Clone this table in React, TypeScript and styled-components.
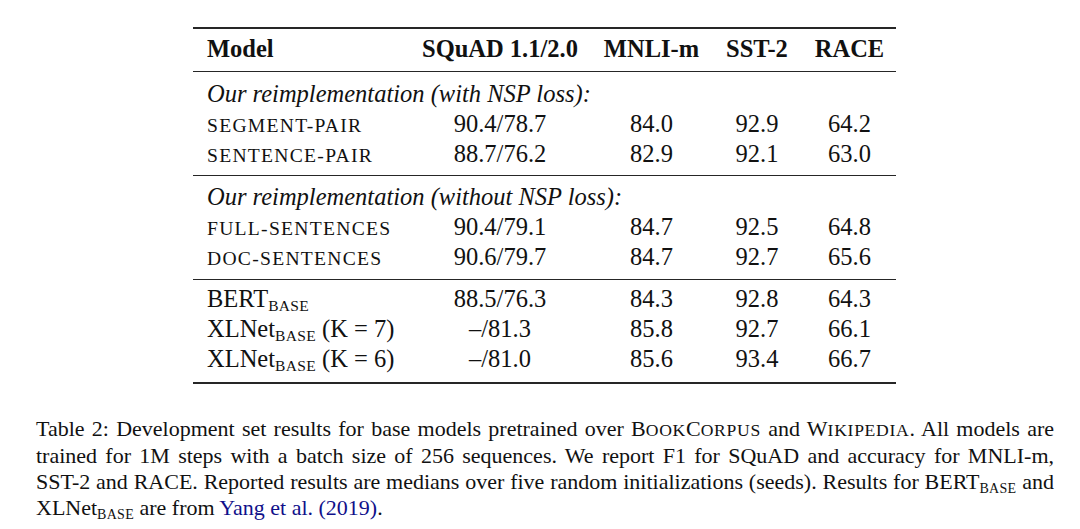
import React from "react";
import styled, { createGlobalStyle } from "styled-components";

const Global = createGlobalStyle`
  html, body { margin: 0; padding: 0; background: #fff; }
  body { font-family: "Liberation Serif", "Times New Roman", serif; color: #111; }
`;

const Page = styled.div`
  width: 1080px;
  height: 529px;
  padding-top: 27px;
  box-sizing: border-box;
  overflow: hidden;
`;

const Table = styled.div`
  margin-left: 193px;
  width: 703px;
  font-size: 24.5px;
`;

const Rule = styled.div<{ $thick?: boolean; $top: number }>`
  height: ${(p) => (p.$thick ? 2 : 1)}px;
  margin-top: ${(p) => p.$top}px;
  background: #262626;
`;

const Group = styled.div<{ $top: number }>`
  margin-top: ${(p) => p.$top}px;
`;

const Row = styled.div<{ $bold?: boolean }>`
  display: grid;
  grid-template-columns: 215px 184px 119px 92px 93px;
  height: 30px;
  line-height: 30px;
  font-weight: ${(p) => (p.$bold ? 700 : 400)};
  white-space: nowrap;
`;

const Label = styled.div`
  padding-left: 14px;
`;

const Num = styled.div`
  text-align: center;
`;

const Section = styled.div`
  height: 30px;
  line-height: 30px;
  padding-left: 14px;
  font-style: italic;
  white-space: nowrap;
`;

const SmallCaps = styled.span<{ $wide?: boolean }>`
  font-size: 0.8em;
  letter-spacing: ${(p) => (p.$wide ? "0.065em" : "0.04em")};
  text-transform: uppercase;
`;

const Sub = styled.span<{ $size: number }>`
  font-size: ${(p) => p.$size}px;
  letter-spacing: 0.02em;
  text-transform: uppercase;
  vertical-align: -${(p) => Math.round(p.$size * 0.25)}px;
  line-height: 0;
`;

const Caption = styled.div`
  margin-top: 32px;
  margin-left: 36px;
  width: 1018px;
  font-size: 22px;
  line-height: 26px;
`;

const CaptionLine = styled.div<{ $last?: boolean }>`
  text-align: ${(p) => (p.$last ? "left" : "justify")};
  text-align-last: ${(p) => (p.$last ? "left" : "justify")};
  white-space: ${(p) => (p.$last ? "nowrap" : "normal")};
`;

const Cite = styled.span`
  color: #10108a;
`;

type DataRow = { label: React.ReactNode; v: [string, string, string, string] };

const Base = ({ size }: { size: number }) => <Sub $size={size}>base</Sub>;

const group1: DataRow[] = [
  { label: <SmallCaps $wide>segment-pair</SmallCaps>, v: ["90.4/78.7", "84.0", "92.9", "64.2"] },
  { label: <SmallCaps $wide>sentence-pair</SmallCaps>, v: ["88.7/76.2", "82.9", "92.1", "63.0"] },
];
const group2: DataRow[] = [
  { label: <SmallCaps $wide>full-sentences</SmallCaps>, v: ["90.4/79.1", "84.7", "92.5", "64.8"] },
  { label: <SmallCaps $wide>doc-sentences</SmallCaps>, v: ["90.6/79.7", "84.7", "92.7", "65.6"] },
];
const group3: DataRow[] = [
  { label: <>BERT<Base size={15.5} /></>, v: ["88.5/76.3", "84.3", "92.8", "64.3"] },
  { label: <>XLNet<Base size={15.5} /> (K = 7)</>, v: ["–/81.3", "85.8", "92.7", "66.1"] },
  { label: <>XLNet<Base size={15.5} /> (K = 6)</>, v: ["–/81.0", "85.6", "93.4", "66.7"] },
];

const Rows = ({ rows }: { rows: DataRow[] }) => (
  <>
    {rows.map((r, i) => (
      <Row key={i}>
        <Label>{r.label}</Label>
        {r.v.map((x, j) => (
          <Num key={j}>{x}</Num>
        ))}
      </Row>
    ))}
  </>
);

export default function App() {
  return (
    <Page>
      <Global />
      <Table>
        <Rule $thick $top={0} />
        <Group $top={5}>
          <Row $bold>
            <Label>Model</Label>
            <Num>SQuAD 1.1/2.0</Num>
            <Num>MNLI-m</Num>
            <Num>SST-2</Num>
            <Num>RACE</Num>
          </Row>
        </Group>
        <Rule $top={7} />
        <Group $top={7}>
          <Section>Our reimplementation (with NSP loss):</Section>
          <Rows rows={group1} />
        </Group>
        <Rule $top={6} />
        <Group $top={6}>
          <Section>Our reimplementation (without NSP loss):</Section>
          <Rows rows={group2} />
        </Group>
        <Rule $top={7} />
        <Group $top={4}>
          <Rows rows={group3} />
        </Group>
        <Rule $thick $top={8} />
      </Table>
      <Caption>
        <CaptionLine>
          Table 2: Development set results for base models pretrained over B
          <SmallCaps>ook</SmallCaps>C<SmallCaps>orpus</SmallCaps> and W
          <SmallCaps>ikipedia</SmallCaps>. All models are
        </CaptionLine>
        <CaptionLine>
          trained for 1M steps with a batch size of 256 sequences. We report F1 for SQuAD and accuracy for MNLI-m,
        </CaptionLine>
        <CaptionLine>
          SST-2 and RACE. Reported results are medians over five random initializations (seeds). Results for BERT
          <Base size={14} /> and
        </CaptionLine>
        <CaptionLine $last>
          XLNet<Base size={14} /> are from <Cite>Yang et al. (2019)</Cite>.
        </CaptionLine>
      </Caption>
    </Page>
  );
}
